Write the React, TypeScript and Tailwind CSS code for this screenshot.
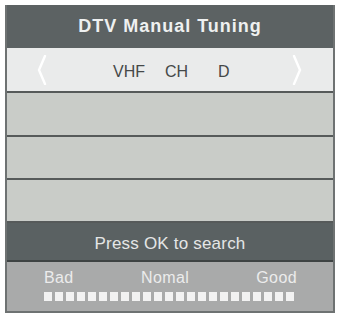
const font = { fontFamily: '"Liberation Sans", Arial, sans-serif' }

const Chevron = ({ flip }: { flip?: boolean }) => (
  <svg width="10" height="30" viewBox="0 0 10 30" className={flip ? 'scale-x-[-1]' : ''}>
    <path d="M8 1 L2 15 L8 29" fill="none" stroke="#ffffff" strokeWidth="2.4" strokeLinecap="round" />
  </svg>
)

const App = () => {
  const bars = Array.from({ length: 23 })
  return (
    <div className="w-[337px] h-[315px] bg-white pt-[5px] pl-[5px]" style={font}>
      <div className="w-[330px] border-x-2 border-[#6e7272] flex flex-col">
        <div className="h-[43px] bg-[#5c6263] flex items-center justify-center">
          <span className="text-[18px] font-bold tracking-[1px] text-[#eef0f0]">DTV Manual Tuning</span>
        </div>
        <div className="h-[45px] bg-[#eaebeb] border-b-2 border-[#565a5a] flex items-center pl-[30px] pr-[31px]">
          <Chevron />
          <div className="flex-1 flex items-center text-[16px] text-[#454848] pl-[66px] pt-[5px]">
            <span className="w-[52px]">VHF</span>
            <span className="w-[53px]">CH</span>
            <span>D</span>
          </div>
          <Chevron flip />
        </div>
        <div className="h-[44px] bg-[#c9ccc8] border-b-2 border-[#565a5a]" />
        <div className="h-[43px] bg-[#c9ccc8] border-b-2 border-[#565a5a]" />
        <div className="h-[43px] bg-[#c9ccc8] border-b-2 border-[#565a5a]" />
        <div className="h-[39px] bg-[#5a6162] border-b-2 border-[#3e4343] flex items-center justify-center pt-[5px]">
          <span className="text-[17px] text-[#e4e6e6] tracking-[0.2px]">Press OK to search</span>
        </div>
        <div className="h-[51px] bg-[#a9aaaa] border-b-2 border-[#6e7272] flex flex-col pl-[37px] pr-[36px] pt-[7px]">
          <div className="flex text-[16px] text-[#ececec] leading-[18px] tracking-[0.4px]">
            <span className="w-[97px]">Bad</span>
            <span>Nomal</span>
            <span className="ml-auto">Good</span>
          </div>
          <div className="flex gap-[3px] mt-[5px]">
            {bars.map((_, i) => (
              <div key={i} className="w-[8px] h-[9px] bg-[#f2f2f2]" />
            ))}
          </div>
        </div>
      </div>
    </div>
  )
}

export default App
